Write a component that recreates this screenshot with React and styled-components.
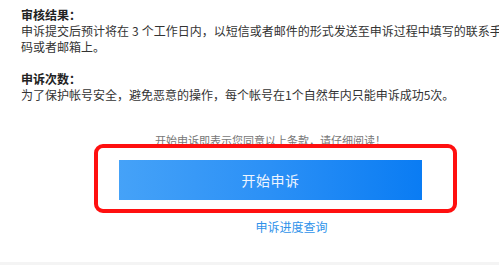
import React from 'react';
import styled, { createGlobalStyle } from 'styled-components';

const GlobalStyle = createGlobalStyle`
  html, body {
    margin: 0;
    padding: 0;
    background: #f4f4f4;
    overflow: hidden;
  }
  body {
    font-family: "Noto Sans CJK SC", "Liberation Sans", sans-serif;
  }
`;

const Page = styled.div`
  width: 541px;
  height: 262px;
  background: #fff;
  display: flex;
  flex-direction: column;
`;

const Notes = styled.div`
  padding: 7px 9px 0 21px;
  font-size: 12px;
  line-height: 16px;
  color: #333;
`;

const Section = styled.div`
  margin-bottom: ${(p) => (p.last ? '0' : '16px')};
`;

const Title = styled.div`
  font-weight: bold;
  color: #222;
`;

const Num = styled.span`
  padding: 0 3px;
`;

const Agreement = styled.div`
  margin-top: 30px;
  text-align: center;
  font-size: 11px;
  line-height: 14px;
  color: #777;
`;

const Highlight = styled.div`
  margin: -3px 0 0 94px;
  width: 363px;
  box-sizing: border-box;
  border: 4px solid #ff1010;
  border-radius: 9px;
  padding: 12px 31px 9px 21px;
  display: flex;
`;

const StartButton = styled.button`
  flex: 1;
  height: 40px;
  border: none;
  border-radius: 0;
  background: linear-gradient(90deg, #45a2f8 0%, #2b90f6 50%, #0a7cf3 100%);
  color: #eef5ff;
  font-family: inherit;
  font-size: 14px;
  letter-spacing: 0.5px;
  cursor: pointer;
`;

const ProgressLink = styled.a`
  margin-top: 6px;
  align-self: center;
  margin-left: 42px;
  font-size: 12px;
  line-height: 16px;
  color: #2e92ea;
  text-decoration: none;
`;

export default function App() {
  return (
    <Page>
      <GlobalStyle />
      <Notes>
        <Section>
          <Title>审核结果：</Title>
          <div>
            申诉提交后预计将在<Num>3</Num>个工作日内，以短信或者邮件的形式发送至申诉过程中填写的联系手机号码或者邮箱上。
          </div>
        </Section>
        <Section last>
          <Title>申诉次数：</Title>
          <div>为了保护帐号安全，避免恶意的操作，每个帐号在1个自然年内只能申诉成功5次。</div>
        </Section>
      </Notes>
      <Agreement>开始申诉即表示您同意以上条款，请仔细阅读！</Agreement>
      <Highlight>
        <StartButton>开始申诉</StartButton>
      </Highlight>
      <ProgressLink href="#">申诉进度查询</ProgressLink>
    </Page>
  );
}
